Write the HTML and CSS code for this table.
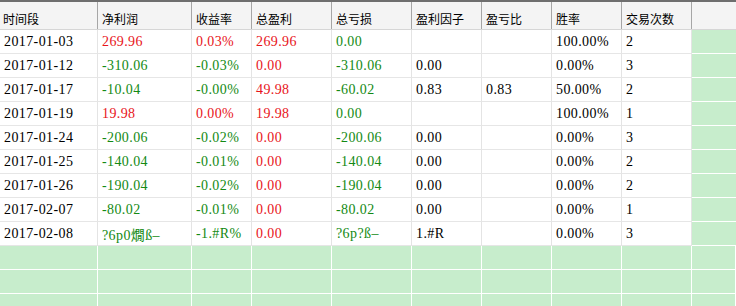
FILE: index.html
```html
<!DOCTYPE html>
<html>
<head>
<meta charset="utf-8">
<link rel="stylesheet" href="styles.css">
</head>
<body>
<div class="table">
  <div class="hrow">
    <div class="hc">时间段</div><div class="hc">净利润</div><div class="hc">收益率</div><div class="hc">总盈利</div><div class="hc">总亏损</div><div class="hc">盈利因子</div><div class="hc">盈亏比</div><div class="hc">胜率</div><div class="hc">交易次数</div><div class="hc"></div>
  </div>
  <div class="row"><div class="c">2017-01-03</div><div class="c r">269.96</div><div class="c r">0.03%</div><div class="c r">269.96</div><div class="c g">0.00</div><div class="c"></div><div class="c"></div><div class="c">100.00%</div><div class="c">2</div><div class="c e"></div></div>
  <div class="row"><div class="c">2017-01-12</div><div class="c g">-310.06</div><div class="c g">-0.03%</div><div class="c r">0.00</div><div class="c g">-310.06</div><div class="c">0.00</div><div class="c"></div><div class="c">0.00%</div><div class="c">3</div><div class="c e"></div></div>
  <div class="row"><div class="c">2017-01-17</div><div class="c g">-10.04</div><div class="c g">-0.00%</div><div class="c r">49.98</div><div class="c g">-60.02</div><div class="c">0.83</div><div class="c">0.83</div><div class="c">50.00%</div><div class="c">2</div><div class="c e"></div></div>
  <div class="row"><div class="c">2017-01-19</div><div class="c r">19.98</div><div class="c r">0.00%</div><div class="c r">19.98</div><div class="c g">0.00</div><div class="c"></div><div class="c"></div><div class="c">100.00%</div><div class="c">1</div><div class="c e"></div></div>
  <div class="row"><div class="c">2017-01-24</div><div class="c g">-200.06</div><div class="c g">-0.02%</div><div class="c r">0.00</div><div class="c g">-200.06</div><div class="c">0.00</div><div class="c"></div><div class="c">0.00%</div><div class="c">3</div><div class="c e"></div></div>
  <div class="row"><div class="c">2017-01-25</div><div class="c g">-140.04</div><div class="c g">-0.01%</div><div class="c r">0.00</div><div class="c g">-140.04</div><div class="c">0.00</div><div class="c"></div><div class="c">0.00%</div><div class="c">2</div><div class="c e"></div></div>
  <div class="row"><div class="c">2017-01-26</div><div class="c g">-190.04</div><div class="c g">-0.02%</div><div class="c r">0.00</div><div class="c g">-190.04</div><div class="c">0.00</div><div class="c"></div><div class="c">0.00%</div><div class="c">2</div><div class="c e"></div></div>
  <div class="row"><div class="c">2017-02-07</div><div class="c g">-80.02</div><div class="c g">-0.01%</div><div class="c r">0.00</div><div class="c g">-80.02</div><div class="c">0.00</div><div class="c"></div><div class="c">0.00%</div><div class="c">1</div><div class="c e"></div></div>
  <div class="row"><div class="c">2017-02-08</div><div class="c g">?6p0燗ß–</div><div class="c g">-1.#R%</div><div class="c r">0.00</div><div class="c g">?6p?ß–</div><div class="c">1.#R</div><div class="c"></div><div class="c">0.00%</div><div class="c">3</div><div class="c e"></div></div>
  <div class="row empty"><div class="c"></div><div class="c"></div><div class="c"></div><div class="c"></div><div class="c"></div><div class="c"></div><div class="c"></div><div class="c"></div><div class="c"></div><div class="c"></div></div>
  <div class="row empty"><div class="c"></div><div class="c"></div><div class="c"></div><div class="c"></div><div class="c"></div><div class="c"></div><div class="c"></div><div class="c"></div><div class="c"></div><div class="c"></div></div>
  <div class="row empty"><div class="c"></div><div class="c"></div><div class="c"></div><div class="c"></div><div class="c"></div><div class="c"></div><div class="c"></div><div class="c"></div><div class="c"></div><div class="c"></div></div>
</div>
</body>
</html>
```
FILE: styles.css
```css
html, body {
  margin: 0;
  padding: 0;
  background: #c7edcc;
  overflow: hidden;
}
.table {
  width: 736px;
  height: 306px;
  overflow: hidden;
  border-top: 2px solid #6e6e6e;
  box-sizing: border-box;
}
.hrow, .row {
  display: grid;
  grid-template-columns: 98px 94px 60px 80px 80px 70px 70px 70px 70px 44px;
}
.hrow {
  height: 28px;
  background: #f4f4f4;
  border-bottom: 1px solid #d6d6d6;
  box-sizing: border-box;
}
.hc {
  border-right: 1px solid #a6a6a6;
  font-family: "Noto Sans CJK SC", "Microsoft YaHei", sans-serif;
  font-size: 12px;
  color: #000;
  padding: 5px 0 0 4px;
  display: flex;
  align-items: center;
  white-space: nowrap;
  overflow: hidden;
}
.hc:first-child {
  padding-left: 3px;
}
.hc:last-child {
  border-right: none;
}
.row {
  height: 24px;
}
.c {
  background: #fff;
  border-right: 1px solid #e4e4e4;
  border-bottom: 1px solid #e6e6e6;
  box-sizing: border-box;
  font-family: "Liberation Serif", "Noto Sans CJK SC", serif;
  font-size: 14px;
  letter-spacing: 0.4px;
  color: #000;
  padding-left: 4px;
  display: flex;
  align-items: center;
  white-space: nowrap;
  overflow: hidden;
}
.c.e {
  background: #c7edcc;
  border-right: none;
  border-bottom: 1px solid #fff;
}
.r { color: #e8141a; }
.g { color: #138a13; }
.empty .c {
  background: #c7edcc;
  border-right: 1px solid #fff;
  border-bottom: 1px solid #fff;
}
```
